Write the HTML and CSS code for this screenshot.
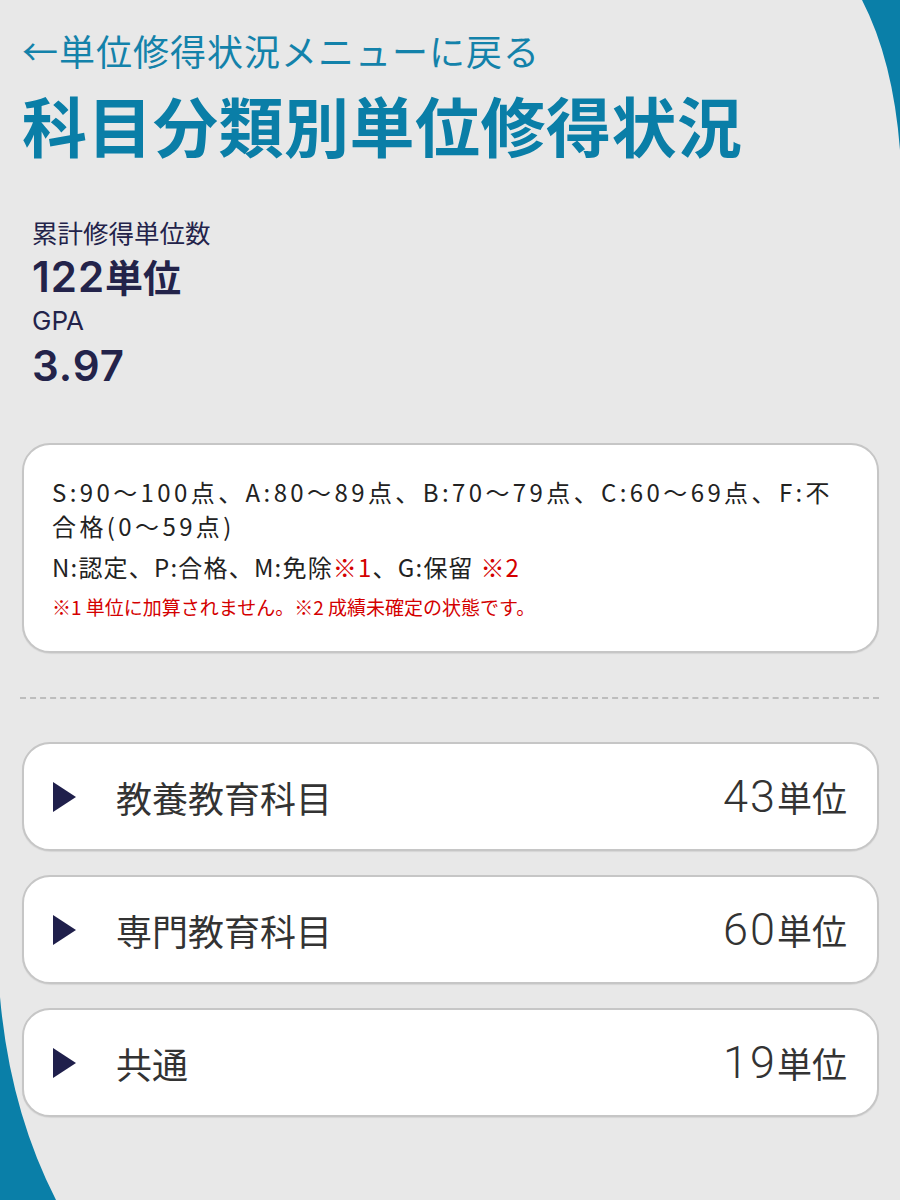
FILE: index.html
```html
<!DOCTYPE html>
<html lang="ja">
<head>
<meta charset="utf-8">
<title>科目分類別単位修得状況</title>
<link rel="stylesheet" href="styles.css">
</head>
<body>
<svg class="decor" width="900" height="1200" viewBox="0 0 900 1200" aria-hidden="true">
  <path d="M862 0 Q893 60 900 150 L900 0 Z" fill="#0a7fa8"/>
  <path d="M0 997 Q10 1110 56 1200 L0 1200 Z" fill="#0a7fa8"/>
</svg>
<main class="page">
  <a class="back" href="#">←単位修得状況メニューに戻る</a>
  <h1 class="title">科目分類別単位修得状況</h1>

  <section class="stats">
    <div class="stat-label">累計修得単位数</div>
    <div class="stat-value"><span class="num">122</span>単位</div>
    <div class="stat-label gpa">GPA</div>
    <div class="stat-value"><span class="num">3.97</span></div>
  </section>

  <section class="legend">
    <p class="legend-line">S:90〜100点、A:80〜89点、B:70〜79点、C:60〜69点、F:不合格(0〜59点)</p>
    <p class="legend-line second">N:認定、P:合格、M:免除<span class="mark">※1</span>、G:保留 <span class="mark">※2</span></p>
    <p class="legend-note">※1 単位に加算されません。※2 成績未確定の状態です。</p>
  </section>

  <hr class="divider">

  <ul class="rows">
    <li class="row"><span class="tri"></span><span class="row-label">教養教育科目</span><span class="row-value"><span class="digits">43</span>単位</span></li>
    <li class="row"><span class="tri"></span><span class="row-label">専門教育科目</span><span class="row-value"><span class="digits">60</span>単位</span></li>
    <li class="row"><span class="tri"></span><span class="row-label">共通</span><span class="row-value"><span class="digits">19</span>単位</span></li>
  </ul>
</main>
</body>
</html>
```

FILE: styles.css
```css
html, body {
  margin: 0;
  padding: 0;
}
body {
  background: #e8e8e8;
  font-family: "Noto Sans CJK JP", "Noto Sans", sans-serif;
  width: 900px;
  min-height: 1200px;
  position: relative;
  overflow: hidden;
}
.decor {
  position: absolute;
  left: 0;
  top: 0;
  z-index: 0;
  pointer-events: none;
}
.page {
  position: relative;
  z-index: 1;
  padding: 28px 21px 0 22px;
}
.back {
  display: block;
  font-size: 36px;
  line-height: 44px;
  color: #1382aa;
  text-decoration: none;
  letter-spacing: 1px;
}
.title {
  margin: 12px 0 0;
  font-size: 65px;
  line-height: 80px;
  font-weight: 700;
  color: #0a7ea7;
  letter-spacing: 0.5px;
}
.stats {
  margin-top: 51px;
  padding-left: 10px;
  color: #23234a;
}
.stat-label {
  font-size: 25.5px;
  line-height: 34px;
}
.stat-label.gpa {
  font-family: "Inter", "Noto Sans CJK JP", sans-serif;
  font-size: 26px;
  line-height: 34px;
}
.stat-value {
  font-size: 38px;
  line-height: 54px;
  font-weight: 700;
}
.stat-value .num {
  font-family: "Inter", "Noto Sans CJK JP", sans-serif;
  font-size: 42px;
  font-weight: 600;
  letter-spacing: 1px;
}
.legend {
  margin-top: 50px;
  background: #ffffff;
  border: 2px solid #c6c6c6;
  border-radius: 28px;
  padding: 30px 28px 30px 28px;
  box-shadow: 0 1px 1px rgba(0, 0, 0, 0.08);
}
.legend-line {
  margin: 0;
  font-size: 24px;
  line-height: 34px;
  color: #222222;
  letter-spacing: 3.4px;
}
.legend-line.second {
  margin-top: 7px;
  letter-spacing: 1.2px;
}
.mark {
  color: #d40000;
}
.legend-note {
  margin: 9px 0 0;
  font-size: 19px;
  line-height: 28px;
  color: #d40000;
}
.divider {
  margin: 44px 0 0 -2px;
  border: 0;
  border-top: 2px dashed #bdbdbd;
  height: 0;
}
.rows {
  list-style: none;
  margin: 43px 0 0;
  padding: 0;
  display: flex;
  flex-direction: column;
  gap: 24px;
}
.row {
  display: flex;
  align-items: center;
  height: 105px;
  background: #ffffff;
  border: 2px solid #c6c6c6;
  border-radius: 28px;
  padding: 0 30px 0 29px;
  box-shadow: 0 1px 1px rgba(0, 0, 0, 0.08);
}
.tri {
  width: 0;
  height: 0;
  border-left: 23px solid #1f1f4b;
  border-top: 15px solid transparent;
  border-bottom: 15px solid transparent;
  flex: none;
}
.row-label {
  margin-left: 40px;
  font-size: 36px;
  line-height: 48px;
  color: #333333;
  flex: 1;
}
.row-value {
  font-size: 35px;
  line-height: 48px;
  color: #333333;
}
.row-value .digits {
  font-family: "Roboto", "Noto Sans", sans-serif;
  font-weight: 300;
  font-size: 45px;
  letter-spacing: 2px;
}
```
